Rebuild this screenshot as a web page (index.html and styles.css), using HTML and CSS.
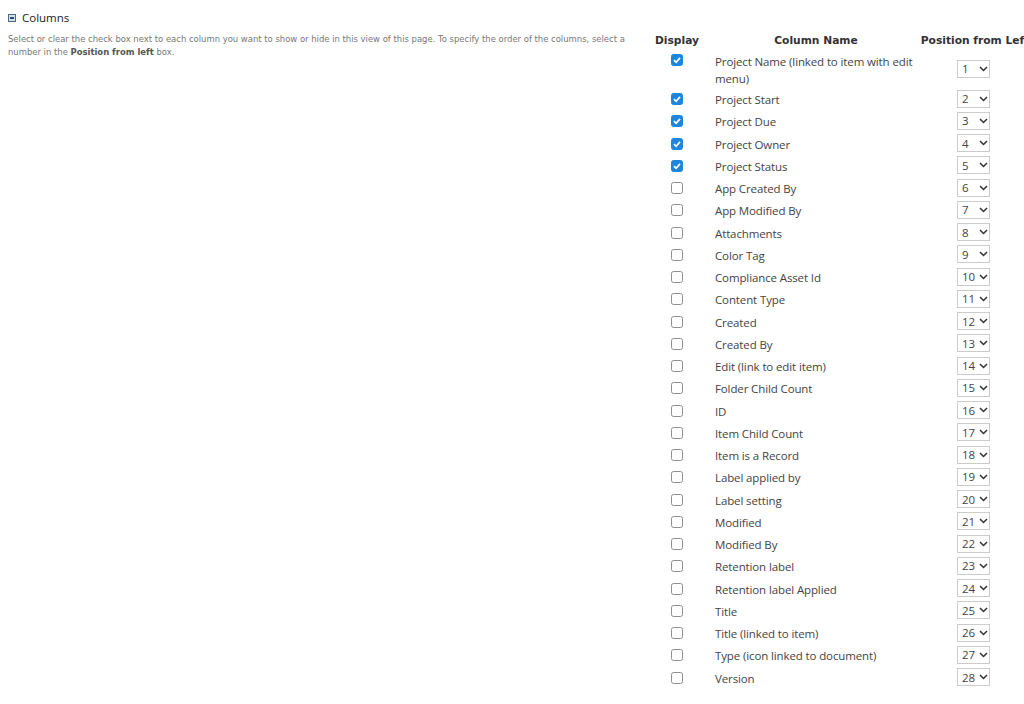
FILE: index.html
```html
<!DOCTYPE html>
<html lang="en">
<head>
  <meta charset="UTF-8">
  <title>Columns</title>
  <link rel="stylesheet" href="styles.css">
</head>
<body>
  <div class="section">
    <div class="intro">
      <h2 class="section-title">
        <svg class="collapse-icon" width="8" height="8" viewBox="0 0 8 8"><rect x="0.5" y="0.5" width="7" height="7" fill="#d5dfea" stroke="#4f6a88"/><rect x="2" y="3" width="4" height="2" fill="#2f4a68"/></svg>
        Columns
      </h2>
      <p class="section-desc">Select or clear the check box next to each column you want to show or hide in this view of this page. To specify the order of the columns, select a number in the <b>Position from left</b> box.</p>
    </div>
    <table class="columns">
      <thead>
        <tr><th class="col-display">Display</th><th class="col-name">Column Name</th><th class="col-pos">Position from Left</th></tr>
      </thead>
      <tbody>
        <tr class="tall"><td class="cell-check"><input type="checkbox" checked></td><td class="cell-name">Project Name (linked to item with edit menu)</td><td class="cell-pos"><select><option>1</option></select></td></tr>
        <tr><td class="cell-check"><input type="checkbox" checked></td><td class="cell-name">Project Start</td><td class="cell-pos"><select><option>2</option></select></td></tr>
        <tr><td class="cell-check"><input type="checkbox" checked></td><td class="cell-name">Project Due</td><td class="cell-pos"><select><option>3</option></select></td></tr>
        <tr><td class="cell-check"><input type="checkbox" checked></td><td class="cell-name">Project Owner</td><td class="cell-pos"><select><option>4</option></select></td></tr>
        <tr><td class="cell-check"><input type="checkbox" checked></td><td class="cell-name">Project Status</td><td class="cell-pos"><select><option>5</option></select></td></tr>
        <tr><td class="cell-check"><input type="checkbox"></td><td class="cell-name">App Created By</td><td class="cell-pos"><select><option>6</option></select></td></tr>
        <tr><td class="cell-check"><input type="checkbox"></td><td class="cell-name">App Modified By</td><td class="cell-pos"><select><option>7</option></select></td></tr>
        <tr><td class="cell-check"><input type="checkbox"></td><td class="cell-name">Attachments</td><td class="cell-pos"><select><option>8</option></select></td></tr>
        <tr><td class="cell-check"><input type="checkbox"></td><td class="cell-name">Color Tag</td><td class="cell-pos"><select><option>9</option></select></td></tr>
        <tr><td class="cell-check"><input type="checkbox"></td><td class="cell-name">Compliance Asset Id</td><td class="cell-pos"><select><option>10</option></select></td></tr>
        <tr><td class="cell-check"><input type="checkbox"></td><td class="cell-name">Content Type</td><td class="cell-pos"><select><option>11</option></select></td></tr>
        <tr><td class="cell-check"><input type="checkbox"></td><td class="cell-name">Created</td><td class="cell-pos"><select><option>12</option></select></td></tr>
        <tr><td class="cell-check"><input type="checkbox"></td><td class="cell-name">Created By</td><td class="cell-pos"><select><option>13</option></select></td></tr>
        <tr><td class="cell-check"><input type="checkbox"></td><td class="cell-name">Edit (link to edit item)</td><td class="cell-pos"><select><option>14</option></select></td></tr>
        <tr><td class="cell-check"><input type="checkbox"></td><td class="cell-name">Folder Child Count</td><td class="cell-pos"><select><option>15</option></select></td></tr>
        <tr><td class="cell-check"><input type="checkbox"></td><td class="cell-name">ID</td><td class="cell-pos"><select><option>16</option></select></td></tr>
        <tr><td class="cell-check"><input type="checkbox"></td><td class="cell-name">Item Child Count</td><td class="cell-pos"><select><option>17</option></select></td></tr>
        <tr><td class="cell-check"><input type="checkbox"></td><td class="cell-name">Item is a Record</td><td class="cell-pos"><select><option>18</option></select></td></tr>
        <tr><td class="cell-check"><input type="checkbox"></td><td class="cell-name">Label applied by</td><td class="cell-pos"><select><option>19</option></select></td></tr>
        <tr><td class="cell-check"><input type="checkbox"></td><td class="cell-name">Label setting</td><td class="cell-pos"><select><option>20</option></select></td></tr>
        <tr><td class="cell-check"><input type="checkbox"></td><td class="cell-name">Modified</td><td class="cell-pos"><select><option>21</option></select></td></tr>
        <tr><td class="cell-check"><input type="checkbox"></td><td class="cell-name">Modified By</td><td class="cell-pos"><select><option>22</option></select></td></tr>
        <tr><td class="cell-check"><input type="checkbox"></td><td class="cell-name">Retention label</td><td class="cell-pos"><select><option>23</option></select></td></tr>
        <tr><td class="cell-check"><input type="checkbox"></td><td class="cell-name">Retention label Applied</td><td class="cell-pos"><select><option>24</option></select></td></tr>
        <tr><td class="cell-check"><input type="checkbox"></td><td class="cell-name">Title</td><td class="cell-pos"><select><option>25</option></select></td></tr>
        <tr><td class="cell-check"><input type="checkbox"></td><td class="cell-name">Title (linked to item)</td><td class="cell-pos"><select><option>26</option></select></td></tr>
        <tr><td class="cell-check"><input type="checkbox"></td><td class="cell-name">Type (icon linked to document)</td><td class="cell-pos"><select><option>27</option></select></td></tr>
        <tr><td class="cell-check"><input type="checkbox"></td><td class="cell-name">Version</td><td class="cell-pos"><select><option>28</option></select></td></tr>
      </tbody>
    </table>
  </div>
</body>
</html>
```
FILE: styles.css
```css
html, body {
  height: 100%;
}

body {
  margin: 0;
  overflow: hidden;
  background: #fff;
  font-family: "Open Sans", "Noto Sans", sans-serif;
  color: #444;
}

.section {
  display: flex;
  padding: 10px 0 0 8px;
}

.intro {
  flex: none;
  width: 622px;
  margin-right: 9px;
}

.section-title {
  display: flex;
  align-items: center;
  gap: 6px;
  margin: 0;
  font-size: 11.5px;
  font-weight: 400;
  line-height: 16px;
  color: #222;
}

.section-desc {
  margin: 7px 0 0;
  font-family: "DejaVu Sans", sans-serif;
  font-size: 8.45px;
  line-height: 13px;
  color: #777;
}

.section-desc b {
  color: #555;
}

.columns {
  flex: none;
  border-collapse: collapse;
  table-layout: fixed;
  width: 394px;
  margin-top: 17px;
}

.columns th {
  padding: 0;
  height: 26px;
  font-family: "DejaVu Sans", sans-serif;
  font-size: 10.7px;
  font-weight: 700;
  color: #333;
  text-align: center;
  white-space: nowrap;
}

.col-display {
  width: 76px;
}

.col-name {
  width: 202px;
}

.col-pos {
  width: 116px;
}

.columns td {
  padding: 0;
  height: 22.25px;
  font-size: 11.5px;
  letter-spacing: -0.12px;
  line-height: 17px;
}

.columns .tall td {
  height: 35.5px;
}

.cell-check {
  text-align: center;
}

.cell-check input {
  display: block;
  box-sizing: border-box;
  width: 12px;
  height: 12px;
  margin: -1px auto 0;
  appearance: none;
  border: 1px solid #8f8f8f;
  border-radius: 2.5px;
  background: #fff;
}

.cell-check input:checked {
  border-color: #1f86dd;
  background: #1f86dd url("data:image/svg+xml,%3Csvg xmlns='http://www.w3.org/2000/svg' width='10' height='10'%3E%3Cpath d='M2 5.2l2.1 2.1L8 2.9' fill='none' stroke='%23fff' stroke-width='1.7'/%3E%3C/svg%3E") no-repeat center;
}

.tall .cell-check, .tall .cell-name {
  vertical-align: top;
}

.tall .cell-check input {
  margin-top: 1px;
}

.cell-pos select {
  display: block;
  width: 33px;
  height: 18px;
  margin: -2px 0 0 40px;
  padding: 0 0 0 4px;
  border: 1px solid #ccc;
  border-radius: 0;
  appearance: none;
  background: #fff url("data:image/svg+xml,%3Csvg xmlns='http://www.w3.org/2000/svg' width='9' height='6'%3E%3Cpath d='M1 1l3.5 3.5L8 1' fill='none' stroke='%23333' stroke-width='1.5'/%3E%3C/svg%3E") no-repeat 21px 5px;
  font-family: "Open Sans", sans-serif;
  font-size: 11.5px;
  color: #444;
}

.tall .cell-pos select {
  margin-top: -4px;
}
```
